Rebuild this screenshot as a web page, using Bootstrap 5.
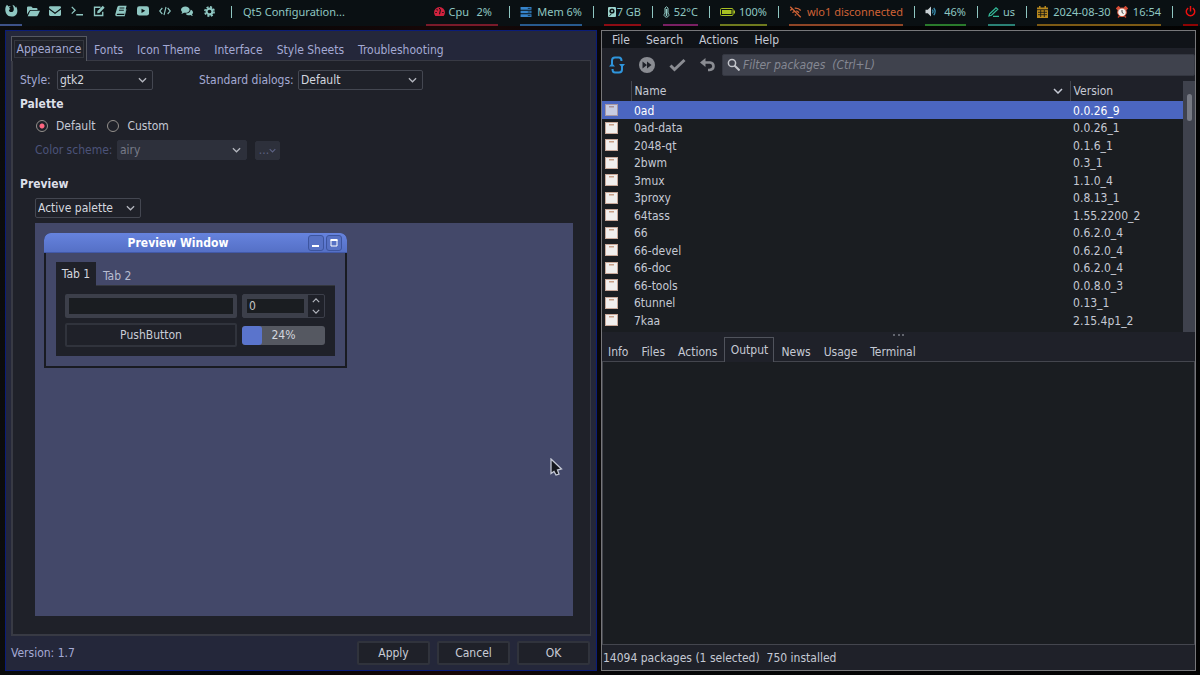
<!DOCTYPE html>
<html lang="en" data-bs-theme="dark">
<head>
<meta charset="utf-8">
<meta name="viewport" content="width=device-width, initial-scale=1">
<title>Desktop</title>
<link rel="stylesheet" href="https://cdn.jsdelivr.net/npm/bootstrap@5.3.0/dist/css/bootstrap.min.css">
<style>
:root{--ink:#c5c9d4;--lav:#a4aad4;--panel:#1f2129;--deep:#1a1d21;--line:#3d4049;--slate:#434869;--teal:#8fc7c2;--blue:#4b66c0}
body{font:12px/16px "DejaVu Sans Condensed","DejaVu Sans",sans-serif;color:var(--ink);background:linear-gradient(90deg,#0b0c0d,#050607 20%,#180707 38%,#060708 52%,#030303);min-height:100vh}
button,input,select,label{font:inherit}
svg{display:block;flex:none}
/* status bar */
.topbar{height:26px;background:#0a1013;color:var(--teal);padding-right:2px;font:11px/16px "Noto Sans",sans-serif}
.topbar a{color:inherit;text-decoration:none}
.launch{width:22px;height:26px;display:flex;align-items:center;justify-content:center;padding-bottom:3px;border-bottom:1px solid transparent}
.launch.on{border-bottom:2px solid #3d5288}
.rule{width:1px;height:12px;background:var(--teal);margin:0 0 2px 1px;flex:none}
.first-rule{margin-left:11px}
.title-text{padding-bottom:2px}
.mods{gap:10px}
.mod{height:26px;display:flex;align-items:center;justify-content:space-between;white-space:nowrap;padding-bottom:1px;border-bottom:2px solid var(--u)}
.m-cpu{width:72px;padding-right:6px;--u:#7a1a2a}.m-mem{width:62px;--u:#285a8e}.m-disk{width:37px;--u:#8e0c14}
.m-temp{width:35px;--u:#7a2063}.m-bat{width:47px;--u:#6f7a1e}.m-net{width:114px;--u:#8f4526;color:#cf6236}
.m-vol{width:41px;--u:#2a7a2c}.m-key{width:27px;--u:#2a8074}.m-date{width:124px;--u:#7d5a14}.m-pow{width:15px;--u:#8e0404}
/* windows */
.desk{display:grid;grid-template-columns:592fr 595fr;gap:4px;padding:4px 4px 4px 5px}
.win{min-width:0;display:flex;flex-direction:column}
.qt{background:#24273a;border:1px solid #0a1c78;padding:5px;color:var(--lav)}
.pk{background:var(--panel);border:1px solid #77777a}
.tabrow{display:flex;align-items:flex-end;position:relative;z-index:1;margin-bottom:-1px}
.tabrow button{border:0;background:none;color:inherit;padding:0;white-space:nowrap}
.qt-tabs button{height:22px;margin-left:14px}
.qt-tabs button:first-child{height:25px;width:76px;margin:0 -7px 0 0;background:var(--panel);border:1px solid #555861;border-bottom:0;padding:0 0 1px}
.qt-tabs .focusbox{display:block;margin:0 3px;outline:1px solid #34373f;line-height:16px}
.qt-panel{flex:1;background:var(--panel);border:1px solid #383a44;border-left-width:2px;border-bottom-width:2px;padding:9px 17px 18px 7px;display:flex;flex-direction:column}
.box{appearance:none;height:20px;border:1px solid #444751;border-radius:2px;background:var(--panel) url("data:image/svg+xml,%3Csvg xmlns='http://www.w3.org/2000/svg' viewBox='0 0 10 6'%3E%3Cpath d='M1 1l4 4 4-4' fill='none' stroke='%23b4b7bf' stroke-width='1.4'/%3E%3C/svg%3E") no-repeat right 5px center/9px 6px;color:#d4d7df;padding:0 2px;line-height:18px}
.box:disabled{opacity:1;background-color:#2d303b;border-color:#2d303b;color:#777b87}
.w-style{width:96px}.w-dlg{width:125px}.w-scheme{width:130px}.w-pal{width:106px}
.l-style{width:37px}.l-dlg{width:99px;margin-left:46px}.l-scheme{width:82px;color:#4c5379}
.indent{margin-left:15px}
.gap-6{margin-top:6px}
.choices{color:var(--ink)}
h2{font:bold 12px/16px "DejaVu Sans Condensed","DejaVu Sans",sans-serif;margin:0;color:#dcdfe8}
.dot{appearance:none;width:12px;height:12px;border:1px solid #94908c;border-radius:50%;margin:0;flex:none}
.dot+label+.dot{margin-left:12px}
.dot:checked{background:radial-gradient(circle,#ff6680 0 2px,transparent 3px)}
.more{width:25px;height:19px;border:1px solid #2d303b;border-radius:2px;background:#2d303b;color:#5d6284;padding:0;display:flex;align-items:center;justify-content:center}
.stage{background:var(--slate);flex:1;margin:5px 0 0 15px;padding:10px 9px}
.mdi{width:303px;border:2px solid #191b22;border-top:0;border-radius:7px 7px 0 0}
.mdi-title{margin:0 -2px;padding:0 5px 0 6px;height:20px;border-radius:7px 7px 0 0;background:linear-gradient(#6683de,#5570c6);color:#fff;font-weight:bold;border-bottom:1px solid #4259a8;display:flex;align-items:center;gap:2px}
.mdi-title button{width:16px;height:16px;border:1px solid #3d559f;border-radius:3px;background:#5771c4;padding:0;display:grid;place-items:center}
.mdi-body{padding:9px 10px 10px}
.mdi-tabs button{height:21px;margin-left:7px;color:#b7bcd0}
.mdi-tabs button:first-child{width:40px;height:24px;margin:0;background:var(--panel);color:#d4d7df}
.mdi-pane{background:var(--panel);padding:8px 9px 9px;display:grid;grid-template-columns:172px 83px;column-gap:5px;row-gap:5px;align-items:center;border-top:1px solid #34373f}
.mdi-pane>.thick,.mdi-pane>.flatbtn,.spin{height:24px}
.thick{border:4px solid #3c3f4a;background:var(--deep);color:#c4c4c4;border-radius:2px;min-width:0;padding:0 2px;outline:0}
.spin{display:grid;grid-template-columns:1fr 16px;grid-template-rows:22px;border:1px solid #3c3f4a;border-radius:2px}
.spin .thick{height:22px;border-radius:0;line-height:14px}
.spin button{border:0;background:none;padding:0;display:grid;place-items:center;color:#b4b7bf}
.flatbtn{background:var(--panel);border:2px solid #30333c;border-radius:2px;color:#c9ccd6;padding:0}
.meter{height:19px;border-radius:3px;background:#555861;position:relative;overflow:hidden;color:#d4d7df;text-align:center;line-height:19px}
.meter .fill{position:absolute;inset:0 auto 0 0;background:#5a74cc;border-radius:3px}
.meter span{position:relative}
.foot{gap:7px;margin-top:5px;padding-right:1px}
.foot .flatbtn{width:73px;height:24px}
/* package manager */
.menus{height:17px;background:#101318;display:flex;align-items:center;gap:16px;padding:1px 10px 0}
.menus a{color:var(--ink);text-decoration:none}
.tools{height:33px;gap:10px;padding:0 0 0 5px}
.tools button{border:0;background:none;padding:0;width:20px;display:grid;place-items:center}
.find{flex:1;height:22px;background:#3f424d;border:1px solid #343741;border-radius:2px;display:flex;align-items:center;gap:3px;padding-left:4px;margin-left:-5px}
.find input{flex:1;border:0;background:none;outline:0;color:var(--ink);padding:0}
.find input::placeholder{color:#858893;font-style:italic;opacity:1}
.list-area{background:var(--deep)}
.pkgs{width:100%;table-layout:fixed;border-collapse:collapse;white-space:nowrap;margin-bottom:3px}
.pkgs th{height:20px;font-weight:normal;background:var(--panel);padding:0 3px;border-left:1px solid #44464e}
.pkgs th:first-child{border:0}
.pkgs td{height:17px;padding:1px 3px 0;line-height:16px}
.pkgs tr:nth-child(odd) td{height:18px}
.pkgs td:first-child{padding:0 0 0 3px}
.pkgs tr.picked{background:var(--blue);color:#fff}
.c-ico{width:29px}.c-ver{width:113px}
.bar-v{width:12px;background:#3f424d;padding:13px 3px 0 4px}
.bar-v div{height:27px;border-radius:3px;background:#777a84}
.pk-tabs button{height:21px;margin-left:13px}
.pk-tabs button:first-child{margin-left:6px}
.pk-tabs .up{width:50px;height:25px;margin:0 -6px 0 7px;background:var(--panel);border:1px solid #50535c;border-bottom:0;padding-bottom:1px}
.output{flex:1;background:var(--deep);border:1px solid #44464e}
.status{height:25px;padding:5px 1px 0;white-space:pre}
.pointer{position:absolute;left:515px;top:235px}
</style>
</head>
<body class="d-flex flex-column">
<svg width="0" height="0" class="position-absolute" aria-hidden="true">
 <symbol id="pkg" viewBox="0 0 13 12"><path fill="#c9a99a" d="M0 0h13v12H0z"/><path fill="#f1efee" d="M1 1h11v10H1z"/><path fill="#c9a088" d="M4 2h5v1.500H4z"/></symbol>
 <symbol id="down" viewBox="0 0 10 6"><path d="M1 1l4 4 4-4" fill="none" stroke="currentColor" stroke-width="1.500"/></symbol>
</svg>
<header class="topbar d-flex align-items-center">
 <nav class="d-flex" aria-label="Launchers">
  <a class="launch on" href="#" aria-label="Browser"><svg width="13" height="13" viewBox="0 0 16 16"><path fill="currentColor" d="M1 3c.5-.5 1-1 1.200-2 1 .5 1.500 1 2 2 .9-.4 2-.4 3 0C6 3.500 5 4 5 5l1.500.8c-.2.800-1.500.9-1.700 1.800.5 2.500 3.500 3 5 1.500C11.500 7.500 11 4 9 1c2 .5 3.500 2 4 3.500l.6-1.300C16.500 7.500 16 15.500 8 15.500 1 15.500-.8 8 1 3z"/></svg></a>
  <a class="launch" href="#" aria-label="Files"><svg width="13" height="11" viewBox="0 0 18 14"><path fill="currentColor" d="M0 11V1.500Q0 0 1.500 0H6l2 2h5q1.500 0 1.500 1.500V5H5Q3.800 5 3.200 6z M1 13.500l3-6.500q.4-1 1.500-1H18l-3.200 6.500q-.5 1-1.500 1z"/></svg></a>
  <a class="launch" href="#" aria-label="Mail"><svg width="12" height="10" viewBox="0 0 16 13"><path fill="currentColor" d="M1.500 0h13Q16 0 16 1.500V2.500L8 8.500 0 2.500V1.500Q0 0 1.500 0zM0 4.500l8 6 8-6v7q0 1.500-1.500 1.500h-13Q0 13 0 11.500z"/></svg></a>
  <a class="launch" href="#" aria-label="Terminal"><svg width="12" height="10" viewBox="0 0 16 13"><path fill="none" stroke="currentColor" stroke-width="1.700" d="M1 1l4.500 4.500L1 10M7 11.500h9"/></svg></a>
  <a class="launch" href="#" aria-label="Editor"><svg width="12" height="12" viewBox="0 0 16 16"><path fill="none" stroke="currentColor" stroke-width="1.800" d="M10 3H2v11h11V9"/><path fill="currentColor" d="M6 8l7-7 2.500 2.500-7 7L5.500 11z"/></svg></a>
  <a class="launch" href="#" aria-label="Notes"><svg width="12" height="12" viewBox="0 0 16 16"><path fill="currentColor" d="M5 1h10.500l-2.800 10.500H3.500q-1.500.5-1 1.800h9.800l2.200-8 .8.700-2.400 9H2Q-.2 14.500.5 12L3 3q.5-1.500 2-2z"/><path stroke="#0a1013" stroke-width="1.200" d="M6 4h6.500M5.300 7h6.500"/></svg></a>
  <a class="launch" href="#" aria-label="Video"><svg width="12" height="10" viewBox="0 0 16 13"><rect width="16" height="12.500" rx="3" fill="currentColor"/><path fill="#0a1013" d="M6 3.500l5 2.800-5 2.800z"/></svg></a>
  <a class="launch" href="#" aria-label="Code"><svg width="12" height="10" viewBox="0 0 18 14"><path fill="none" stroke="currentColor" stroke-width="1.700" d="M5 2.500L1 7l4 4.500M13 2.500L17 7l-4 4.500M10.500 1l-3 12"/></svg></a>
  <a class="launch" href="#" aria-label="Chat"><svg width="12" height="11" viewBox="0 0 18 15"><path fill="currentColor" d="M6.500 0C10 0 13 2 13 4.800S10 9.500 6.500 9.500q-1 0-2-.3Q2.500 10.700.5 10.700q1.200-1.200 1.400-2.500Q0 6.500 0 4.800C0 2 3 0 6.500 0zM14.300 5C16.500 5.500 18 7 18 9q0 1.500-1.500 2.800.3 1.500 1.500 2.400-2 0-3.800-1.400C11.500 13.500 8.500 13 7 10.800 11 10.800 14.500 8.500 14.300 5z"/></svg></a>
  <a class="launch" href="#" aria-label="Settings"><svg width="11" height="11" viewBox="0 0 16 16"><g fill="none" stroke="currentColor"><circle cx="8" cy="8" r="4.200" stroke-width="3"/><circle cx="8" cy="8" r="6.700" stroke-width="2.400" stroke-dasharray="3 2.260"/></g></svg></a>
 </nav>
 <div class="rule first-rule"></div>
 <div class="first-rule title-text">Qt5 Configuration...</div>
 <div class="mods d-flex align-items-center ms-auto">
  <div class="mod m-cpu"><svg class="ms-2" width="11" height="9" viewBox="0 0 16 13"><path fill="#d0223e" d="M2 13Q0 10.500 0 8a8 8 0 0 1 16 0q0 2.500-2 5z"/><path stroke="#0a1013" stroke-width="1.500" d="M8 10.500l1.500-7M2 8h2M12 8h2M3.800 3.500l1.400 1.400M8 1.300v2"/></svg><span>Cpu</span><span class="ps-1">2%</span></div>
  <div class="rule"></div>
  <div class="mod m-mem"><svg width="12" height="10" viewBox="0 0 12 11"><path fill="#3684cc" d="M0 0h12v3H0zM0 4h12v3H0zM0 8h12v3H0z"/><path stroke="#0a1013" d="M8 1.500h3M8 5.500h3M8 9.500h3" stroke-width=".8"/></svg><span>Mem 6%</span></div>
  <div class="rule"></div>
  <div class="mod m-disk"><svg class="ms-1" width="8" height="10" viewBox="0 0 8 10"><rect width="8" height="10" rx="1" fill="#9cd4cd"/><circle cx="4" cy="4" r="2.600" fill="#0a1013"/><circle cx="4" cy="4" r="1" fill="#9cd4cd"/><path stroke="#0a1013" d="M1.500 8.500l2-1.500"/></svg><span>7 GB</span></div>
  <div class="rule"></div>
  <div class="mod m-temp"><svg width="7" height="12" viewBox="0 0 7 12"><path fill="none" stroke="currentColor" d="M2 7V2Q3.500-.5 5 2V7Q7.500 10 3.500 11.300-.500 10 2 7z"/><path stroke="currentColor" stroke-width="1.500" d="M3.500 3v7"/></svg><span>52°C</span></div>
  <div class="rule"></div>
  <div class="mod m-bat"><svg width="15" height="8" viewBox="0 0 15 8"><rect x=".5" y=".5" width="12.500" height="7" rx="1" fill="none" stroke="#a8c022"/><path fill="#a8c022" d="M2 2h9.500v4H2zM13.500 2.500H15v3h-1.500z"/></svg><span>100%</span></div>
  <div class="rule"></div>
  <div class="mod m-net"><svg width="13" height="12" viewBox="0 0 16 16"><path fill="none" stroke="currentColor" stroke-width="1.700" d="M1 1l14 14M1 6Q3 4 4 3.800M7 3q5-.5 8 3M4 9q1-1 2.500-1.400M9 6.500q2 .5 3.500 2.500M7 12h2"/></svg><span>wlo1 disconnected</span></div>
  <div class="rule"></div>
  <div class="mod m-vol"><svg width="12" height="11" viewBox="0 0 12 12"><path fill="#c8d0d4" d="M0 4h2.500L6 .5v11L2.500 8H0z"/><path fill="none" stroke="#3a94b8" stroke-width="1.300" d="M7.500 4q1.500 2 0 4M9 2q3 4 0 8"/></svg><span>46%</span></div>
  <div class="rule"></div>
  <div class="mod m-key"><svg width="11" height="10" viewBox="0 0 11 10"><path fill="none" stroke="#34b898" stroke-width="1.200" d="M1.500 7L8 .8l1.800 1.500L3.500 8.300 1 9zM5 9.300h6"/></svg><span>us</span></div>
  <div class="rule"></div>
  <div class="mod m-date"><svg width="11" height="12" viewBox="0 0 11 12"><path fill="#b8881e" d="M0 1.500h11V12H0zM2 0h1.500v2H2zM7.500 0H9v2H7.500z"/><path stroke="#0a1013" stroke-width=".8" d="M0 3.700h11M1 6.300h9M1 8.700h9M3.700 4v7M7.300 4v7"/></svg><span>2024-08-30</span><svg width="12" height="12" viewBox="0 0 12 12"><path stroke="#d64a34" stroke-width="3" d="M.8 3.500L3.500.8M8.500.8l2.700 2.700"/><path stroke="#c0452f" stroke-width="1.500" d="M2 11.500L3.500 10M10 11.500L8.500 10"/><circle cx="6" cy="6.300" r="4.300" fill="#f4f1ed" stroke="#d8563e"/><path fill="none" stroke="#444" d="M6 4v2.500l1.500 1"/></svg><span>16:54</span></div>
  <div class="rule"></div>
  <a class="mod m-pow justify-content-center" href="#" aria-label="Power"><svg width="11" height="11" viewBox="0 0 12 12"><path fill="none" stroke="#f01010" stroke-width="1.600" d="M3.500 2.200a4.600 4.600 0 1 0 5 0M6 0v6"/></svg></a>
 </div>
</header>

<main class="desk flex-grow-1">
 <section class="win qt" aria-label="Qt5 Configuration Tool">
  <div class="tabrow qt-tabs" role="tablist">
   <button role="tab" aria-selected="true"><span class="focusbox">Appearance</span></button>
   <button role="tab">Fonts</button><button role="tab">Icon Theme</button><button role="tab">Interface</button><button role="tab">Style Sheets</button><button role="tab">Troubleshooting</button>
  </div>
  <div class="qt-panel">
   <div class="d-flex align-items-center">
    <label for="style" class="l-style">Style:</label><select id="style" class="box w-style"><option>gtk2</option></select>
    <label for="dlg" class="l-dlg">Standard dialogs:</label><select id="dlg" class="box w-dlg"><option>Default</option></select>
   </div>
   <h2 class="gap-6">Palette</h2>
   <div class="choices d-flex align-items-center gap-6 ms-3">
    <input class="dot" type="radio" name="pal" id="p1" checked><label for="p1" class="ps-2">Default</label>
    <input class="dot" type="radio" name="pal" id="p2"><label for="p2" class="ps-2">Custom</label>
   </div>
   <div class="d-flex align-items-center gap-6 indent">
    <label for="scheme" class="l-scheme">Color scheme:</label><select id="scheme" class="box w-scheme" disabled><option>airy</option></select>
    <button class="more ms-2" disabled>...<svg width="7" height="5"><use href="#down"/></svg></button>
   </div>
   <h2 class="mt-3">Preview</h2>
   <div class="indent gap-6 d-flex"><select class="box w-pal" aria-label="Preview palette"><option>Active palette</option></select></div>
   <div class="stage position-relative">
    <div class="mdi">
     <div class="mdi-title"><span class="flex-fill text-center">Preview Window</span>
      <button aria-label="Minimize"><svg width="10" height="10"><path d="M1 8h7" stroke="#fff" stroke-width="2"/></svg></button>
      <button aria-label="Maximize"><svg width="10" height="10"><path d="M2 2h6v6H2z" fill="none" stroke="#fff"/><path d="M1.500 2h7" stroke="#fff" stroke-width="2"/></svg></button></div>
     <div class="mdi-body">
      <div class="tabrow mdi-tabs" role="tablist"><button role="tab" aria-selected="true">Tab 1</button><button role="tab">Tab 2</button></div>
      <div class="mdi-pane">
       <input class="thick" type="text" aria-label="Text">
       <div class="spin"><input class="thick" type="text" value="0" aria-label="Number">
        <div class="d-grid"><button aria-label="Up"><svg width="8" height="5" viewBox="0 0 10 6"><path d="M1 5l4-4 4 4" fill="none" stroke="currentColor" stroke-width="1.500"/></svg></button><button aria-label="Down"><svg width="8" height="5"><use href="#down"/></svg></button></div></div>
       <button class="flatbtn">PushButton</button>
       <div class="meter" role="progressbar" aria-valuenow="24"><div class="fill" style="width:24%"></div><span>24%</span></div>
      </div>
     </div>
    </div>
    <svg class="pointer" width="13" height="19" viewBox="0 0 13 19"><path d="M1 1v14.500l3-2 2 3.500 3-1-1.500-4 4-1z" fill="#16181e" stroke="#c4c8d4" stroke-width="1.300"/></svg>
   </div>
  </div>
  <div class="foot d-flex align-items-center"><span class="me-auto">Version: 1.7</span><button class="flatbtn">Apply</button><button class="flatbtn">Cancel</button><button class="flatbtn">OK</button></div>
 </section>

 <section class="win pk" aria-label="Package manager">
  <nav class="menus"><a href="#">File</a><a href="#">Search</a><a href="#">Actions</a><a href="#">Help</a></nav>
  <div class="tools d-flex align-items-center">
   <button aria-label="Refresh"><svg width="16" height="18" viewBox="0 0 16 18"><path fill="none" stroke="#2f95dc" stroke-width="2" d="M3 9V4.500Q3 1.500 6 1.500H10Q12.500 1.500 12.500 5M13 9v4.500Q13 16.500 10 16.500H6Q3.500 16.500 3.500 13"/><path fill="#2f95dc" d="M0 10.500h6L3 7zM10 8h6l-3 3.500z"/></svg></button>
   <button aria-label="Upgrade"><svg width="16" height="16" viewBox="0 0 16 16"><circle cx="8" cy="8" r="8" fill="#8a8c92"/><path fill="#1f2129" d="M3.500 4.500L8 8l-4.500 3.500zM8 4.500L12.500 8 8 11.500z"/></svg></button>
   <button aria-label="Apply"><svg width="17" height="14" viewBox="0 0 17 14"><path fill="none" stroke="#8a8c92" stroke-width="3" d="M1.500 7.500l4 4L15.500 2"/></svg></button>
   <button aria-label="Undo"><svg width="15" height="14" viewBox="0 0 15 14"><path fill="none" stroke="#8a8c92" stroke-width="2.600" d="M4 4.500h6q3.500.5 3.500 3.700T9.500 12H8"/><path fill="#8a8c92" d="M5.500 0v9L0 4.500z"/></svg></button>
   <div class="find"><svg width="13" height="13" viewBox="0 0 13 13"><circle cx="5" cy="5" r="3.600" fill="none" stroke="#c4c6cc" stroke-width="1.500"/><path stroke="#c4c6cc" stroke-width="2" d="M7.500 7.500l5 5"/></svg><input type="text" placeholder="Filter packages  (Ctrl+L)" aria-label="Filter packages"></div>
  </div>
  <div class="d-flex list-area">
   <table class="pkgs">
    <colgroup><col class="c-ico"><col><col class="c-ver"></colgroup>
    <thead><tr><th></th><th><div class="d-flex align-items-center justify-content-between">Name<svg class="me-1" width="10" height="6"><use href="#down"/></svg></div></th><th>Version</th></tr></thead>
    <tbody id="rows"></tbody>
   </table>
   <div class="bar-v"><div></div></div>
  </div>
  <div class="d-flex justify-content-center"><svg width="11" height="5"><path fill="#62656e" d="M0 2h2v2H0zM5 2h2v2H5zM9 2h2v2H9z"/></svg></div>
  <div class="tabrow pk-tabs" role="tablist"><button role="tab">Info</button><button role="tab">Files</button><button role="tab">Actions</button><button class="up" role="tab" aria-selected="true">Output</button><button role="tab">News</button><button role="tab">Usage</button><button role="tab">Terminal</button></div>
  <div class="output"></div>
  <div class="status">14094 packages (1 selected)  750 installed</div>
 </section>
</main>
<script src="https://cdn.jsdelivr.net/npm/bootstrap@5.3.0/dist/js/bootstrap.bundle.min.js"></script>
<script>
const packages=[["0ad","0.0.26_9"],["0ad-data","0.0.26_1"],["2048-qt","0.1.6_1"],["2bwm","0.3_1"],["3mux","1.1.0_4"],["3proxy","0.8.13_1"],["64tass","1.55.2200_2"],["66","0.6.2.0_4"],["66-devel","0.6.2.0_4"],["66-doc","0.6.2.0_4"],["66-tools","0.0.8.0_3"],["6tunnel","0.13_1"],["7kaa","2.15.4p1_2"]];
document.getElementById("rows").innerHTML=packages.map(([n,v],i)=>`<tr class="${i?"":"picked"}"><td><svg width="13" height="12"${i?"":' opacity=".75"'}><use href="#pkg"/></svg></td><td>${n}</td><td>${v}</td></tr>`).join("");
</script>
</body>
</html>
